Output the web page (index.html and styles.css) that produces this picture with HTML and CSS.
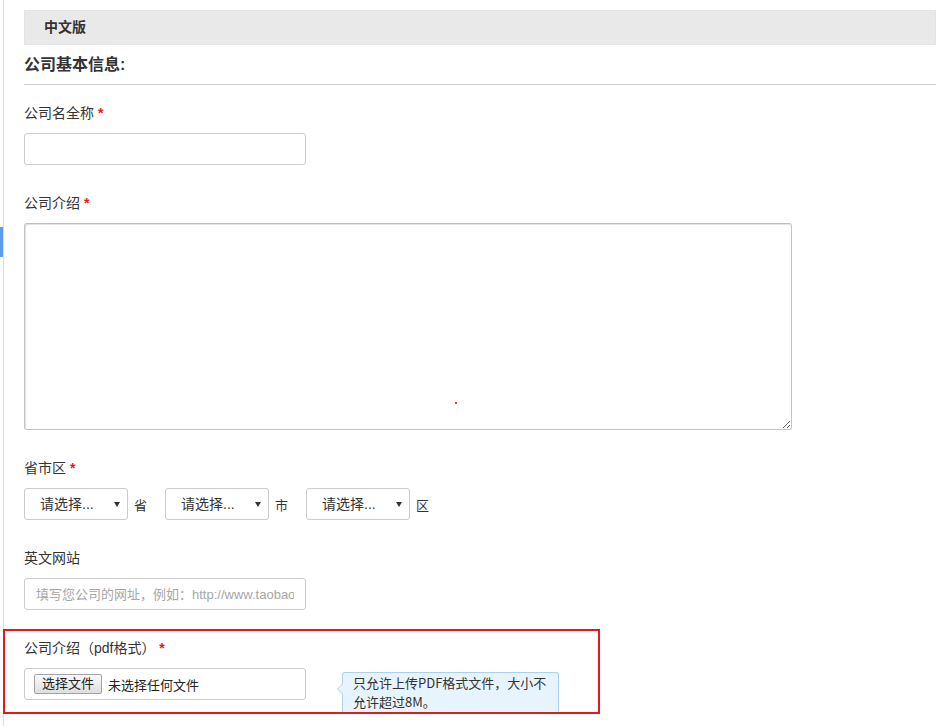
FILE: index.html
```html
<!DOCTYPE html>
<html lang="zh-CN">
<head>
<meta charset="utf-8">
<title>公司基本信息</title>
<link rel="stylesheet" href="styles.css">
</head>
<body>
<div class="page">
  <aside class="rail"><span class="rail-mark"></span></aside>
  <main class="content">
    <div class="tab">中文版</div>
    <h2 class="section-title">公司基本信息:</h2>

    <div class="field first">
      <label class="label">公司名全称 <em class="req">*</em></label>
      <input class="input" type="text">
    </div>

    <div class="field">
      <label class="label">公司介绍 <em class="req">*</em></label>
      <div class="textarea-wrap">
        <textarea class="textarea"></textarea>
        <span class="dot"></span>
      </div>
    </div>

    <div class="field">
      <label class="label">省市区 <em class="req">*</em></label>
      <div class="region-row">
        <div class="region">
          <span class="select">
            <select><option>请选择...</option></select>
            <svg class="caret" width="6" height="5" viewBox="0 0 6 5"><path d="M0 0H6L3 5Z" fill="#333"/></svg>
          </span>
          <span class="unit">省</span>
        </div>
        <div class="region">
          <span class="select">
            <select><option>请选择...</option></select>
            <svg class="caret" width="6" height="5" viewBox="0 0 6 5"><path d="M0 0H6L3 5Z" fill="#333"/></svg>
          </span>
          <span class="unit">市</span>
        </div>
        <div class="region">
          <span class="select">
            <select><option>请选择...</option></select>
            <svg class="caret" width="6" height="5" viewBox="0 0 6 5"><path d="M0 0H6L3 5Z" fill="#333"/></svg>
          </span>
          <span class="unit">区</span>
        </div>
      </div>
    </div>

    <div class="field">
      <label class="label">英文网站</label>
      <input class="input url" type="text" placeholder="填写您公司的网址，例如：http://www.taobao.com">
    </div>

    <div class="field highlight">
      <label class="label">公司介绍（pdf格式） <em class="req">*</em></label>
      <div class="file-row">
        <div class="file-box">
          <button class="file-btn" type="button">选择文件</button>
          <span class="file-name">未选择任何文件</span>
        </div>
        <div class="tip">只允许上传PDF格式文件，大小不<br>允许超过8M。</div>
      </div>
    </div>
  </main>
</div>
</body>
</html>
```

FILE: styles.css
```css
* {
  box-sizing: border-box;
}

html,
body {
  margin: 0;
  padding: 0;
  background: #fff;
}

body {
  font-family: "Liberation Sans", "Noto Sans CJK SC", sans-serif;
  font-size: 14px;
  color: #333;
  overflow: hidden;
}

.page {
  display: flex;
  min-height: 726px;
}

.rail {
  flex: none;
  width: 4px;
  border-right: 1px solid #ddd;
  padding-top: 227px;
}

.rail-mark {
  display: block;
  width: 3px;
  height: 30px;
  background: #5d9cec;
}

.content {
  flex: 1;
  min-width: 0;
  padding: 10px 0 0 20px;
}

.tab {
  height: 35px;
  line-height: 33px;
  background: #e9e9e9;
  border: 1px solid #e4e4e4;
  padding-left: 19px;
  font-size: 14px;
  font-weight: bold;
  color: #333;
}

.section-title {
  margin: 0;
  padding: 8px 0 7px;
  line-height: 24px;
  font-size: 16px;
  font-weight: bold;
  color: #333;
  border-bottom: 1px solid #ccc;
}

.field {
  margin-top: 28px;
}

.field.first {
  margin-top: 18px;
}

.label {
  display: block;
  line-height: 20px;
  margin-bottom: 10px;
  font-size: 14px;
  color: #333;
}

.req {
  font-style: normal;
  font-weight: bold;
  color: #e4191c;
}

.input {
  display: block;
  width: 282px;
  height: 32px;
  border: 1px solid #ccc;
  border-radius: 3px;
  padding: 0 11px;
  font-family: "Liberation Sans", "Noto Sans CJK SC", sans-serif;
  font-size: 13px;
  color: #333;
  background: #fff;
  outline: none;
}

.input::placeholder {
  color: #a6a6a6;
}

.textarea-wrap {
  position: relative;
  width: 768px;
  height: 207px;
}

.textarea {
  display: block;
  width: 768px;
  height: 207px;
  border: 1px solid #c4c4c4;
  border-top-color: #bdbdbd;
  border-radius: 3px;
  box-shadow: inset 1px 1px 1px rgba(0, 0, 0, 0.12);
  resize: both;
  outline: none;
  font-family: "Liberation Sans", "Noto Sans CJK SC", sans-serif;
}

.dot {
  position: absolute;
  left: 431px;
  top: 179px;
  width: 2px;
  height: 2px;
  background: #e33;
}

.region-row {
  display: flex;
  gap: 18px;
}

.region {
  display: flex;
  align-items: center;
  gap: 6px;
}

.select {
  position: relative;
  display: block;
}

.select select {
  display: block;
  width: 104px;
  height: 32px;
  appearance: none;
  -webkit-appearance: none;
  border: 1px solid #ccc;
  border-radius: 3px;
  background: #fff;
  padding: 0 0 0 15px;
  font-family: "Liberation Sans", "Noto Sans CJK SC", sans-serif;
  font-size: 14px;
  color: #333;
  outline: none;
}

.caret {
  position: absolute;
  right: 8px;
  top: 14px;
  display: block;
}

.unit {
  font-size: 13px;
  color: #333;
}

.highlight {
  margin-top: 19px;
  margin-left: -21px;
  width: 597px;
  border: 2px solid #e3191c;
  padding: 7px 0 0 19px;
}

.file-row {
  display: flex;
  align-items: flex-start;
}

.file-box {
  display: flex;
  align-items: center;
  width: 282px;
  height: 32px;
  border: 1px solid #ccc;
  border-radius: 3px;
  padding-left: 9px;
}

.file-btn {
  height: 20px;
  padding: 0 7px;
  border: 1px solid #a3a3a3;
  border-radius: 2px;
  background: linear-gradient(#fbfbfb, #dedede);
  font-family: "Liberation Sans", "Noto Sans CJK SC", sans-serif;
  font-size: 13px;
  line-height: 18px;
  color: #222;
}

.file-name {
  margin-left: 6px;
  font-size: 13px;
  color: #222;
}

.tip {
  position: relative;
  margin-left: 36px;
  margin-top: 4px;
  width: 217px;
  height: 40px;
  padding: 0 10px;
  background: #e8f4fd;
  border: 1px solid #a9d2ef;
  border-bottom: none;
  border-radius: 3px 3px 0 0;
  font-family: "Noto Sans CJK SC", sans-serif;
  font-size: 13px;
  line-height: 19px;
  color: #333;
}

.tip::before,
.tip::after {
  content: "";
  position: absolute;
  top: 11px;
  width: 0;
  height: 0;
  border-top: 5px solid transparent;
  border-bottom: 5px solid transparent;
}

.tip::before {
  left: -6px;
  border-right: 5px solid #a9d2ef;
}

.tip::after {
  left: -5px;
  border-right: 5px solid #e8f4fd;
}
```
